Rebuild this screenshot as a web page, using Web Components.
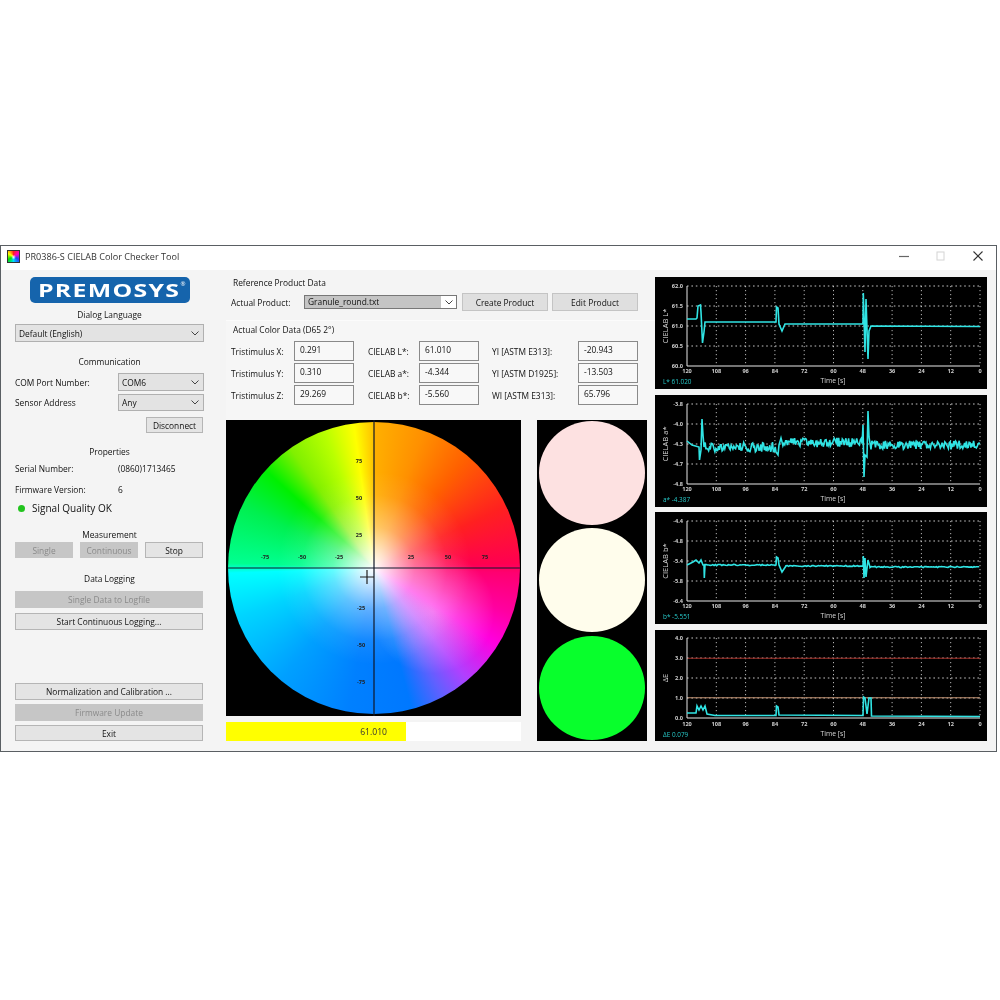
<!DOCTYPE html>
<html><head><meta charset="utf-8"><style>
html,body{margin:0;padding:0;background:#fff}
body{font:8.4px "Open Sans",sans-serif;color:#111;padding-top:245px}
</style></head><body>
<x-window>
  <x-titlebar slot="title">PR0386-S CIELAB Color Checker Tool</x-titlebar>
  <x-left slot="left">
    <x-logo></x-logo>
    <x-head style="margin-top:6px">Dialog Language</x-head>
    <x-combo style="margin-top:3px;height:18px">Default (English)</x-combo>
    <x-head style="margin-top:14px">Communication</x-head>
    <x-row style="margin-top:5px"><span>COM Port Number:</span><x-combo style="height:18px">COM6</x-combo></x-row>
    <x-row style="margin-top:3px"><span>Sensor Address</span><x-combo style="height:17px">Any</x-combo></x-row>
    <x-btn style="margin:6px 1px 0 auto;width:57px;height:16px">Disconnect</x-btn>
    <x-head style="margin-top:13px">Properties</x-head>
    <x-row style="margin-top:3px;height:14px"><span>Serial Number:</span><span>(0860)1713465</span></x-row>
    <x-row style="margin-top:7px;height:14px"><span>Firmware Version:</span><span>6</span></x-row>
    <x-signal style="margin-top:5px">Signal Quality OK</x-signal>
    <x-head style="margin-top:14px">Measurement</x-head>
    <x-triple style="margin-top:1px">
      <x-btn disabled>Single</x-btn><x-btn disabled>Continuous</x-btn><x-btn>Stop</x-btn>
    </x-triple>
    <x-head style="margin-top:15px">Data Logging</x-head>
    <x-btn disabled style="margin:6px 1px 0 0;height:17px">Single Data to Logfile</x-btn>
    <x-btn style="margin:5px 1px 0 0;height:17px">Start Continuous Logging...</x-btn>
    <x-btn style="margin:auto 1px 0 0;height:17px">Normalization and Calibration ...</x-btn>
    <x-btn disabled style="margin:4px 1px 0 0;height:17px">Firmware Update</x-btn>
    <x-btn style="margin:4px 1px 0 0;height:16px">Exit</x-btn>
  </x-left>
  <x-middle slot="middle">
    <x-product></x-product>
    <x-colordata>
      <span>Tristimulus X:</span><x-field>0.291</x-field>
      <span>CIELAB L*:</span><x-field>61.010</x-field>
      <span>YI [ASTM E313]:</span><x-field>-20.943</x-field>
      <span>Tristimulus Y:</span><x-field>0.310</x-field>
      <span>CIELAB a*:</span><x-field>-4.344</x-field>
      <span>YI [ASTM D1925]:</span><x-field>-13.503</x-field>
      <span>Tristimulus Z:</span><x-field>29.269</x-field>
      <span>CIELAB b*:</span><x-field>-5.560</x-field>
      <span>WI [ASTM E313]:</span><x-field>65.796</x-field>
    </x-colordata>
    <x-visual>
      <x-wheel></x-wheel>
      <x-lights></x-lights>
    </x-visual>
  </x-middle>
  <x-charts slot="right">
    <x-chart kind="L" style="height:112px"></x-chart>
    <x-chart kind="a" style="margin-top:6px;height:112px"></x-chart>
    <x-chart kind="b" style="margin-top:5px;height:112px"></x-chart>
    <x-chart kind="E" style="margin-top:6px;height:111px"></x-chart>
  </x-charts>
</x-window>
<script>
function def(name, css, html, extra){
  const C = class extends HTMLElement{
    constructor(){super();const r=this.attachShadow({mode:'open'});
      r.innerHTML='<style>'+css+'</style>'+(typeof html==='function'?html(this):html);}
    connectedCallback(){ if(extra) extra(this); }
  };
  customElements.define(name,C);
}
def('x-window',`:host{display:flex;flex-direction:column;width:995px;height:505px;border:1px solid #5a5f63;background:#f4f4f4;filter:blur(.5px)}
 .b{display:flex;flex:1;min-height:0}`,
 `<slot name="title"></slot><div class="b"><slot name="left"></slot><slot name="middle"></slot><slot name="right"></slot></div>`);
def('x-titlebar',`:host{display:flex;align-items:center;height:24px;padding-bottom:4px;box-sizing:border-box;background:#fff;flex:none;font-size:9.1px;color:#333}
 svg{display:block;flex:none}.ic{margin:0 5px 0 6px}.t{flex:1}
 .c{width:37px;height:20px;display:flex;align-items:center;justify-content:center}`,
 `<div class="ic" style="width:13px;height:13px;background:radial-gradient(circle at 50% 55%,#fff 0,transparent 30%),conic-gradient(#ff2020,#ff00c0,#2040ff,#00e0ff,#00e000,#ffff00,#ff2020);border:1px solid #333;box-sizing:border-box"></div>
 <div class="t"><slot></slot></div>
 <div class="c"><svg width="10" height="10"><path d="M0 5.5H10" stroke="#666" stroke-width="1.2"/></svg></div>
 <div class="c"><svg width="10" height="10"><rect x="1" y="1" width="7" height="8" fill="none" stroke="#d4d4d4"/></svg></div>
 <div class="c" style="margin-right:0"><svg width="10" height="10"><path d="M.5 .5L9.5 9.5M9.5 .5L.5 9.5" stroke="#333" stroke-width="1.1"/></svg></div>`);
def('x-left',`:host{display:flex;flex-direction:column;box-sizing:border-box;width:225px;padding:0 22px 10px 14px;flex:none}`,`<slot></slot>`);
def('x-logo',`:host{display:flex;align-self:center;align-items:center;justify-content:center;width:160px;height:26px;margin-top:7px;background:#1564ac;border-radius:5px;flex:none;position:relative;color:#fff;font:700 17.5px "Open Sans",sans-serif;letter-spacing:.9px}
 b{display:block;font-weight:700;transform:scaleX(1.42);transform-origin:center}
 sup{position:absolute;right:4px;top:3px;font-size:6px;font-weight:400;letter-spacing:0;line-height:8px}`,`<b>PREMOSYS</b><sup>®</sup>`);
def('x-head',`:host{display:block;height:12px;line-height:12px;text-align:center;flex:none}`,`<slot></slot>`);
def('x-row',`:host{display:grid;grid-template-columns:103px 86px;align-items:center;flex:none}`,`<slot></slot>`);
def('x-combo',`:host{display:flex;align-items:center;box-sizing:border-box;border:1px solid #b0b0b0;background:#e3e3e3;padding:0 4px 0 3px;flex:none}
 .t{flex:1}svg{display:block}`,`<div class="t"><slot></slot></div><svg width="8" height="5"><path d="M.5 .5L4 4L7.5 .5" fill="none" stroke="#444"/></svg>`);
def('x-btn',`:host{display:flex;align-items:center;justify-content:center;box-sizing:border-box;border:1px solid #b5b5b5;background:#e4e4e4;flex:none}
 :host([disabled]){background:#c6c6c6;border-color:#c6c6c6;color:#8a8a8a}`,`<slot></slot>`);
def('x-signal',`:host{display:flex;align-items:center;height:14px;flex:none;font-size:10px;gap:7px;padding-left:3px}
 i{width:7px;height:7px;border-radius:50%;background:#22c41e}`,`<i></i><slot></slot>`);
def('x-triple',`:host{display:grid;grid-template-columns:58px 58px 58px;gap:7px;height:16px;flex:none}`,`<slot></slot>`);
def('x-middle',`:host{display:flex;flex-direction:column;width:429px;flex:none}`,`<slot></slot>`);
def('x-product',`:host{display:block;height:50px;flex:none;padding:7px 0 0 7px;box-sizing:border-box}
 .h{height:12px;line-height:12px}
 .r{display:flex;align-items:center;height:18px;margin:4px 0 0 -2px}
 .l{width:73px}
 .cb{display:flex;width:153px;height:14px;box-sizing:border-box;border:1px solid #777;background:#fff;align-items:stretch}
 .f{width:136px;background:#c4c4c4;padding-left:3px;line-height:12px;box-sizing:border-box}
 .a{flex:1;display:flex;align-items:center;justify-content:center}
 .p{width:86px;height:18px;box-sizing:border-box;border:1px solid #c4c4c4;background:#dfdfdf;display:flex;align-items:center;justify-content:center;margin-left:5px}
 .p+.p{margin-left:4px}svg{display:block}`,
 `<div class="h">Reference Product Data</div>
 <div class="r"><div class="l">Actual Product:</div><div class="cb"><div class="f">Granule_round.txt</div><div class="a"><svg width="8" height="5"><path d="M.5 .5L4 4L7.5 .5" fill="none" stroke="#444"/></svg></div></div>
 <div class="p">Create Product</div><div class="p">Edit Product</div></div>`);
def('x-colordata',`:host{display:block;height:100px;flex:none;box-sizing:border-box;padding:3px 0 0 5px;border-top:1px solid #fbfbfb;background:#f6f6f6}
 .h{height:12px;line-height:12px;margin-left:2px}
 .g{display:grid;grid-template-columns:63px 60px 65px 60px 99px 60px;grid-auto-rows:20px;gap:2px 0;margin-top:5px;align-items:center}
 ::slotted(span:nth-of-type(3n+2)){padding-left:14px}
 ::slotted(span:nth-of-type(3n)){padding-left:13px}`,
 `<div class="h">Actual Color Data (D65 2°)</div><div class="g" id="g"><slot></slot></div>`);
def('x-field',`:host{display:flex;align-items:center;height:20px;box-sizing:border-box;border:1px solid #8a8a8a;background:#f8f8f8;padding:0 0 3px 5px}`,`<slot></slot>`);
def('x-visual',`:host{display:flex;gap:16px;flex:none;height:321px}`,`<slot></slot>`);
def('x-wheel',`:host{display:flex;flex-direction:column;width:295px;flex:none}
 .box{position:relative;height:296px;background:#000;flex:none}
 .disc{position:absolute;left:2px;top:2px;width:292px;height:292px;border-radius:50%;
  background:
   radial-gradient(circle closest-side,#fff 0,rgba(255,255,255,.8) 10%,rgba(255,255,255,.38) 28%,rgba(255,255,255,.08) 50%,rgba(255,255,255,0) 66%),
   radial-gradient(circle 62px at 70% 65%,rgba(255,255,255,.42),rgba(255,255,255,0)),
   conic-gradient(#ffb000 0deg,#ff9000 20deg,#ff6000 40deg,#ff2020 65deg,#ff0050 88deg,#ff0070 92deg,#ff00a0 108deg,#ff00e0 122deg,#b040ff 140deg,#6060ff 152deg,#0078ff 165deg,#0080ff 190deg,#00a0ff 220deg,#00d4ff 250deg,#00ffff 268deg,#00ff90 272deg,#00f050 295deg,#00f000 312deg,#80f000 325deg,#b8ff00 340deg,#ffff00 352deg,#ffc000 360deg)}
 svg{position:absolute;left:0;top:0}
 text{font:bold 5.5px "Open Sans",sans-serif;fill:#222;text-anchor:middle}
 .bar{display:flex;height:19px;margin-top:6px;background:#fff;flex:none}
 .y{width:180px;background:#ffff00;display:flex;align-items:center;justify-content:flex-end;box-sizing:border-box;padding-right:19px;font-size:8.6px;color:#333}`,
 `<div class="box"><div class="disc"></div>
 <svg width="295" height="296"><path d="M148 0V296M2 148H294" stroke="#101828" stroke-width="1.2"/><path d="M134 157H148M141 150V164" stroke="#202020" stroke-width="1.2"/>
 <text x="39" y="139">-75</text><text x="76" y="139">-50</text><text x="113" y="139">-25</text><text x="185" y="139">25</text><text x="222" y="139">50</text><text x="259" y="139">75</text>
 <text x="133" y="43">75</text><text x="133" y="80">50</text><text x="133" y="117">25</text><text x="135" y="190">-25</text><text x="135" y="227">-50</text><text x="135" y="264">-75</text></svg></div>
 <div class="bar"><div class="y">61.010</div></div>`);
def('x-lights',`:host{display:flex;flex-direction:column;align-items:center;width:110px;height:321px;background:#000;flex:none;padding-top:1px;box-sizing:border-box;gap:3px}
 i{display:block;width:106px;height:104px;border-radius:50%}`,
 `<i style="background:#fde1e1"></i><i style="background:#fffdec"></i><i style="background:#08ff2c;margin-top:1px"></i>`);
def('x-charts',`:host{display:flex;flex-direction:column;width:332px;margin-top:7px;flex:none;margin-left:0}`,`<slot></slot>`);

function seed(s){return ()=>(s=(s*16807)%2147483647)/2147483647;}
function noisy(x0,x1,y,amp,rnd,step){let o=[];for(let x=x0;x<x1;x+=step||1.3){o.push([x,y+(rnd()-.5)*amp*2]);}return o;}
const R1=seed(4711);
const DATA={
 L:{title:'CIELAB L*',val:'L*  61.020',ticks:['62.0','61.5','61.0','60.5','60.0'],pts:[[32,42],[41,42],[42,41],[43,29],[45.5,28],[46,35],[47.5,66],[49,55],[50,45],[121,45],[121.5,30],[123,31],[124,47],[127,54],[130,47],[208,47],[208.3,16],[210,75],[211,22],[213,82],[214,54],[216,49],[325,49.5]]},
 a:{title:'CIELAB a*',val:'a*  -4.387',ticks:['-3.8','-4.0','-4.3','-4.7','-4.8'],pts:[[32,46],[37,50],[44,52],[44.5,65],[46,55],[47,24],[48,40],[49,52]].concat(noisy(50,121,52,5,R1,.9),[[121,57],[123,60],[124,50],[126,43]],noisy(127,208,47.5,4.6,R1,.9),[[208,30],[209,82],[210,60],[212,62],[213,16],[214,42]],noisy(216,325,50,4.4,R1,.9))},
 b:{title:'CIELAB b*',val:'b*  -5.551',ticks:['-4.4','-4.8','-5.4','-5.8','-6.4'],pts:[[32,53],[38,50],[41,48],[44,51],[46,48],[48,53],[49,53],[49.3,66],[50,53]].concat(noisy(50,121,53,.6,R1),[[121,53],[121.5,45],[123,46],[124,53],[127,60],[131,54]],noisy(131,208,54,.5,R1),[[208,54],[208.3,44],[209,66],[210,46],[211,65],[213,48],[215,55]],noisy(215,325,55,.6,R1))},
 E:{title:'ΔE',val:'ΔE  0.079',ticks:['4.0','3.0','2.0','1.0','0.0'],lines:[[28.3,'#a02c24'],[67.7,'#c09070']],pts:[[32,83],[41,83],[42,76],[44,80],[46,76],[48,80],[50,76],[52,84],[60,85.5],[121,85.5],[121.5,76],[123,77],[124,85],[208,85.5],[208.5,67],[210,68],[212,84],[214,68],[216,68],[216.5,86],[325,86.5]]}
};
def('x-chart',`:host{display:block;background:#000;flex:none}
 svg{display:block}
 text{font:bold 5.6px "Open Sans",sans-serif;fill:#cfcfcf}
 .t{font:6.8px "Open Sans",sans-serif;fill:#d8d8d8}
 .y{font:7.6px "Open Sans",sans-serif;fill:#d8d8d8}
 .v{font:6.4px "Open Sans",sans-serif;fill:#27c8c8}`,
 function(el){
  const d=DATA[el.getAttribute('kind')];
  const L=32,R=325,T=d.lines?8:9,B=T+80;
  let s='<svg width="332" height="112">';
  for(let i=1;i<=10;i++){const x=L+(R-L)*i/10;s+=`<path d="M${x} ${T}V${B}" stroke="#c8c8c8" stroke-width=".9" stroke-dasharray="1.2 2.8"/>`;}
  for(let i=0;i<4;i++){const y=T+20*i;s+=`<path d="M${L} ${y}H${R}" stroke="#d8d8d8" stroke-width=".9" stroke-dasharray="1.6 2.8"/>`;}
  (d.lines||[]).forEach(l=>s+=`<path d="M${L} ${l[0]}H${R}" stroke="${l[1]}" stroke-width="1.1"/>`);
  s+=`<path d="M${L} ${T}V${B}H${R}" fill="none" stroke="#e8e8e8" stroke-width="1"/>`;
  d.ticks.forEach((t,i)=>s+=`<text x="28" y="${T+20*i+2}" text-anchor="end">${t}</text>`);
  [120,108,96,84,72,60,48,36,24,12,0].forEach((t,i)=>s+=`<text x="${L+(R-L)*i/10}" y="96" text-anchor="middle">${t}</text>`);
  s+=`<text class="t" x="178" y="106" text-anchor="middle">Time [s]</text>`;
  s+=`<text class="y" transform="translate(13 ${T+40}) rotate(-90)" text-anchor="middle">${d.title}</text>`;
  s+=`<text class="v" x="8" y="107">${d.val}</text>`;
  s+=`<polyline fill="none" stroke="#30e4e4" stroke-width="1.6" points="${d.pts.map(p=>p[0].toFixed(1)+','+p[1].toFixed(1)).join(' ')}"/>`;
  return s+'</svg>';
 });
</script>
</body></html>
